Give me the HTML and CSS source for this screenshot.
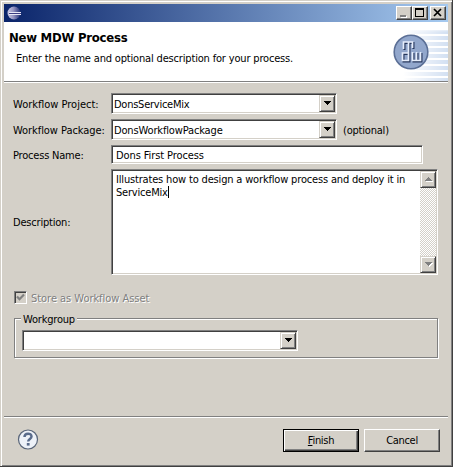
FILE: index.html
```html
<!DOCTYPE html>
<html lang="en">
<head>
<meta charset="utf-8">
<title>New MDW Process</title>
<link rel="stylesheet" href="styles.css">
</head>
<body>
<main class="window">
  <div class="titlebar">
    <svg class="app-icon" width="16" height="16" viewBox="0 0 16 16">
      <defs><linearGradient id="orb" x1="0" y1="0" x2="1" y2="0"><stop offset="0" stop-color="#c9c8e4"/><stop offset=".45" stop-color="#9695c2"/><stop offset="1" stop-color="#22307a"/></linearGradient></defs>
      <circle cx="7" cy="7" r="6.5" fill="url(#orb)"/>
      <path d="M2 6.500h12M2 8.500h12" stroke="#e8e8f6"/>
      <path d="M2 7.500h12" stroke="#3c3d82"/>
    </svg>
    <div class="controls">
      <span class="control"><svg width="14" height="12" shape-rendering="crispEdges"><path d="M4 9h6v2H4z" fill="#fff"/><path d="M3 8h6v2H3z" fill="#808080"/></svg></span>
      <span class="control"><svg width="14" height="12" shape-rendering="crispEdges"><path d="M2 1h9v9H2zM3 3v6h7V3z" fill="#000" fill-rule="evenodd"/></svg></span>
      <span class="control close"><svg width="14" height="12"><path d="M3 2l7 7M10 2L3 9" stroke="#000" stroke-width="1.7"/></svg></span>
    </div>
  </div>
  <header class="banner">
    <div class="heading">
      <h1>New MDW Process</h1>
      <p>Enter the name and optional description for your process.</p>
    </div>
    <div class="stripes">
      <svg class="logo" width="36" height="36" viewBox="0 0 36 36">
        <circle cx="18" cy="18" r="16.8" fill="#92a7cc" stroke="#5b6f96" stroke-width="1.6"/>
        <g fill="none" stroke-width="2">
          <path d="M11.500 16V9h9v6M16.500 9v18.500h-6V20h6M20.500 19v8.500h8V19M24.500 19v8.500" stroke="#26375c"/>
          <path d="M10.500 15V8h9v6M15.500 8v18.500h-6V19h6M19.500 18v8.500h8V18M23.500 18v8.500" stroke="#e6edfb" stroke-width="1.700"/>
        </g>
      </svg>
    </div>
  </header>
  <section class="form">
    <div class="row project"><label>Workflow Project:</label><div class="field combo"><span>DonsServiceMix</span><i class="drop"><svg width="9" height="5" shape-rendering="crispEdges"><path d="M1 0h7v1H1zM2 1h5v1H2zM3 2h3v1H3zM4 3h1v1H4z"/></svg></i></div></div>
    <div class="row package"><label>Workflow Package:</label><div class="field combo"><span>DonsWorkflowPackage</span><i class="drop"><svg width="9" height="5" shape-rendering="crispEdges"><path d="M1 0h7v1H1zM2 1h5v1H2zM3 2h3v1H3zM4 3h1v1H4z"/></svg></i></div><span class="optional">(optional)</span></div>
    <div class="row name"><label>Process Name:</label><div class="field text"><span>Dons First Process</span></div></div>
    <div class="row description"><label>Description:</label>
      <div class="field area"><p><span class="line1">Illustrates how to design a workflow process and deploy it in</span><br><span class="line2">ServiceMix</span><b class="caret"></b></p>
        <div class="scroll"><i class="drop"><svg width="9" height="5" shape-rendering="crispEdges"><path d="M4 0h1v1H4zM3 1h3v1H3zM2 2h5v1H2zM1 3h7v1H1z" fill="#808080"/><path d="M2 4h7v1H2z" fill="#fff"/></svg></i><i class="drop"><svg width="9" height="5" shape-rendering="crispEdges"><path d="M2 1h7v1H2zM3 2h5v1H3zM4 3h3v1H4zM5 4h1v1H5z" fill="#fff"/><path d="M1 0h7v1H1zM2 1h5v1H2zM3 2h3v1H3zM4 3h1v1H4z" fill="#808080"/></svg></i></div>
      </div>
    </div>
    <div class="check"><span class="box"><svg width="9" height="9"><path d="M1 3.500l2.500 2.700L8 1.500" fill="none" stroke="#808080" stroke-width="2.2"/></svg></span><span class="asset">Store as Workflow Asset</span></div>
    <fieldset><legend>Workgroup</legend><div class="field combo"><span></span><i class="drop"><svg width="9" height="5" shape-rendering="crispEdges"><path d="M1 0h7v1H1zM2 1h5v1H2zM3 2h3v1H3zM4 3h1v1H4z"/></svg></i></div></fieldset>
  </section>
  <footer>
    <svg class="help" width="22" height="22" viewBox="0 0 22 22"><circle cx="11" cy="10.500" r="9.5" fill="#edf1f8" stroke="#596579" stroke-width="1.2"/><path d="M7.500 8C7.500 3.500 14.500 3.700 14.500 7.500c0 2.500-3.300 2.400-3.300 5" fill="none" stroke="#596b8b" stroke-width="2.5"/><path d="M9.800 14h2.800v2.600H9.800z" fill="#596b8b"/></svg>
    <div class="button primary"><span><u>F</u>inish</span></div>
    <div class="button"><span>Cancel</span></div>
  </footer>
</main>
</body>
</html>
```
FILE: styles.css
```css
* { box-sizing: border-box; }
body { margin: 0; font: 11px/13px "DejaVu Sans Condensed", "DejaVu Sans", sans-serif; font-stretch: condensed; color: #000; letter-spacing: -.2px; white-space: nowrap; overflow: hidden; }
svg { display: block; flex: none; }
.window { width: 453px; height: 467px; background: #d4d0c8; padding: 4px; display: flex; flex-direction: column; border-right: 1px solid #404040; border-bottom: 1px solid #404040; box-shadow: inset 1px 1px #d4d0c8, inset 2px 2px #fff, inset -1px -1px #808080; }
.titlebar { height: 18px; flex: none; display: flex; justify-content: space-between; background: linear-gradient(90deg, #0a246a, #a6caf0); padding: 2px 2px 2px 3px; }
.controls { display: flex; height: 14px; }
.control { width: 16px; height: 14px; background: #d4d0c8; border: 1px solid; border-color: #fff #404040 #404040 #fff; box-shadow: inset -1px -1px #808080; }
.close { margin-left: 2px; }
.banner { height: 59px; flex: none; background: #fff; display: flex; justify-content: space-between; }
.heading { padding: 8px 0 0 5px; }
h1 { font-size: 13px; line-height: 16px; margin: 0; letter-spacing: -.25px; }
.heading p { margin: 6px 0 0 7px; letter-spacing: -.17px; }
.stripes { width: 60px; height: 59px; padding: 12px 0 0 5px; background: linear-gradient(#fff 6px, #fff0 10px), linear-gradient(90deg, #fff 25%, #fff0), repeating-linear-gradient(#fff 0 2px, #d3e0f2 2px 6px); }
.form { height: 335px; flex: none; border-top: 1px solid #808080; box-shadow: inset 0 1px #fff; padding: 11px 0 0 8px; display: flex; flex-direction: column; }
.row { display: flex; align-items: center; flex: none; }
.row label { width: 99px; padding: 1px 0 0 1px; }
.project label { letter-spacing: 0; }
.package label { letter-spacing: -.06px; }
.field { background: #fff; border: 1px solid; border-color: #808080 #fff #fff #808080; box-shadow: inset 1px 1px #404040, inset -1px -1px #d4d0c8; }
.combo { width: 226px; height: 21px; display: flex; justify-content: space-between; padding: 2px 1px 1px 2px; line-height: 17px; letter-spacing: -.25px; }
.drop { width: 16px; height: 17px; background: #d4d0c8; border: 1px solid; border-color: #d4d0c8 #404040 #404040 #d4d0c8; box-shadow: inset 1px 1px #fff, inset -1px -1px #808080; display: flex; align-items: center; justify-content: center; flex: none; }
.combo .drop { margin-top: -1px; }
.package { margin-top: 5px; }
.package .combo { letter-spacing: -.15px; }
.optional { margin-left: 6px; padding-top: 1px; }
.name { margin-top: 5px; }
.text { width: 312px; height: 19px; padding: 3px 4px 0; letter-spacing: -.1px; }
.description { margin-top: 5px; }
.area { width: 327px; height: 106px; display: flex; justify-content: space-between; padding: 1px; }
.area p { margin: 2px 0 0 3px; }
.line1 { letter-spacing: -.17px; }
.caret { display: inline-block; width: 1px; height: 12px; background: #000; vertical-align: top; }
.scroll { width: 16px; display: flex; flex-direction: column; justify-content: space-between; background: repeating-conic-gradient(#fff 0 25%, #d4d0c8 0 50%) 0 0 / 2px 2px; }
.check { display: flex; align-items: center; margin: 15px 0 0 2px; height: 15px; color: #808080; text-shadow: 1px 1px #fff; letter-spacing: -.04px; }
.box { width: 13px; height: 13px; border: 1px solid; border-color: #808080 #fff #fff #808080; box-shadow: inset 1px 1px #404040; padding: 1px; margin-right: 4px; }
.asset { padding-top: 1px; }
fieldset { margin: 7px 0 0 2px; width: 424px; height: 46px; padding: 5px 7px; border: 1px solid #808080; box-shadow: 1px 1px #fff, inset 1px 1px #fff; min-width: 0; }
legend { height: 13px; line-height: 15px; padding: 0 2px; margin-left: -1px; background: #d4d0c8; }
fieldset .combo { width: 276px; }
footer { height: 47px; border-top: 1px solid #808080; box-shadow: inset 0 1px #fff; display: flex; padding: 12px 8px 0 13px; }
.help { margin-right: auto; }
.button { width: 76px; height: 23px; border: 1px solid; border-color: #fff #404040 #404040 #fff; box-shadow: inset -1px -1px #808080; display: flex; align-items: center; justify-content: center; letter-spacing: -.3px; }
.primary { border-color: #000; box-shadow: inset 1px 1px #fff, inset -1px -1px #404040, inset -2px -2px #808080; margin-right: 5px; }
```
